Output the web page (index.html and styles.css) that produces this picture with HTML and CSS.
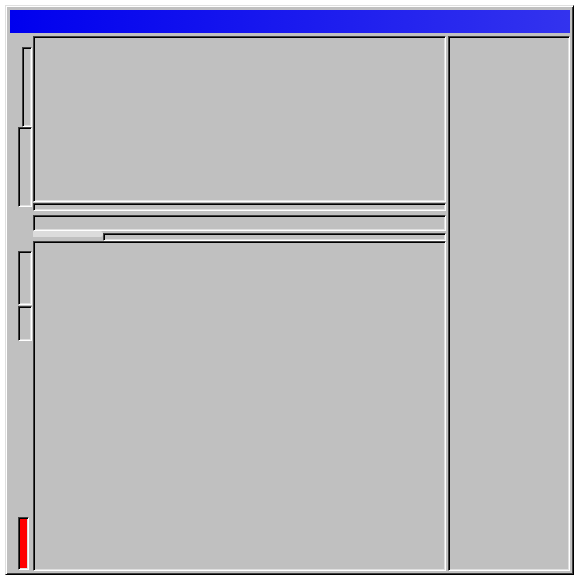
FILE: index.html
```html
<!DOCTYPE html>
<html>
<head>
<meta charset="utf-8">
<link rel="stylesheet" href="styles.css">
</head>
<body>
<div class="window">
  <div class="titlebar"></div>
  <div class="body">
    <div class="leftcol">
      <div class="sunken bar bar1"></div>
      <div class="sunken bar bar2"></div>
      <div class="sunken bar bar3"></div>
      <div class="sunken bar bar4"></div>
      <div class="sunken bar red"></div>
    </div>
    <div class="maincol">
      <div class="sunken toppane"></div>
      <div class="sunken strip1"></div>
      <div class="sunken strip2"></div>
      <div class="strip3row">
        <div class="lightbit"></div>
        <div class="sunken strip3"></div>
      </div>
      <div class="sunken bottompane"></div>
    </div>
    <div class="sunken rightpane"></div>
  </div>
</div>
</body>
</html>
```

FILE: styles.css
```css
* { box-sizing: border-box; }
html, body { margin: 0; padding: 0; background: #ffffff; }
body { width: 581px; height: 584px; position: relative; }

.window {
  position: absolute;
  left: 5px;
  top: 5px;
  width: 569px;
  height: 570px;
  background: #c0c0c0;
  border: 1px solid;
  border-color: #dfdfdf #000000 #000000 #dfdfdf;
  box-shadow: inset 1px 1px #ffffff, inset -1px -1px #404040;
  padding: 3px;
  display: flex;
  flex-direction: column;
}

.titlebar {
  height: 23px;
  margin-left: 1px;
  margin-top: 1px;
  background: linear-gradient(to right, #0000ee, #3333ee);
  flex: none;
}

.body {
  margin-top: 3px;
  margin-left: 1px;
  flex: 1;
  display: flex;
  flex-direction: row;
}

.sunken {
  border: 1px solid;
  border-color: #404040 #ffffff #ffffff #404040;
  box-shadow: inset 1px 1px #000000, inset -1px -1px #dfdfdf;
  background: #c0c0c0;
}

.leftcol {
  width: 23px;
  flex: none;
  display: flex;
  flex-direction: column;
}

.bar { flex: none; }
.bar1 { margin-left: 12px; width: 10px; height: 80px; margin-top: 11px; }
.bar2 { margin-left: 8px; width: 14px; height: 80px; }
.bar3 { margin-left: 8px; width: 14px; height: 54px; margin-top: 44px; }
.bar4 { margin-left: 8px; width: 14px; height: 35px; margin-top: 1px; }
.bar.red { margin-left: 8px; width: 11px; height: 53px; margin-top: auto; margin-bottom: 1px; background: #ff0000; }

.maincol {
  width: 413px;
  flex: none;
  display: flex;
  flex-direction: column;
}

.toppane { height: 166px; flex: none; }
.strip1 { height: 8px; margin-top: 1px; flex: none; }
.strip2 { height: 16px; margin-top: 4px; flex: none; }
.strip3row { height: 8px; margin-top: 2px; flex: none; display: flex; }
.lightbit { width: 70px; height: 6px; margin-top: -2px; background: #dcdcdc; border-radius: 0 3px 3px 0; }
.strip3 { flex: 1; }
.bottompane { flex: 1; }

.rightpane {
  margin-left: 2px;
  flex: 1;
}
```
